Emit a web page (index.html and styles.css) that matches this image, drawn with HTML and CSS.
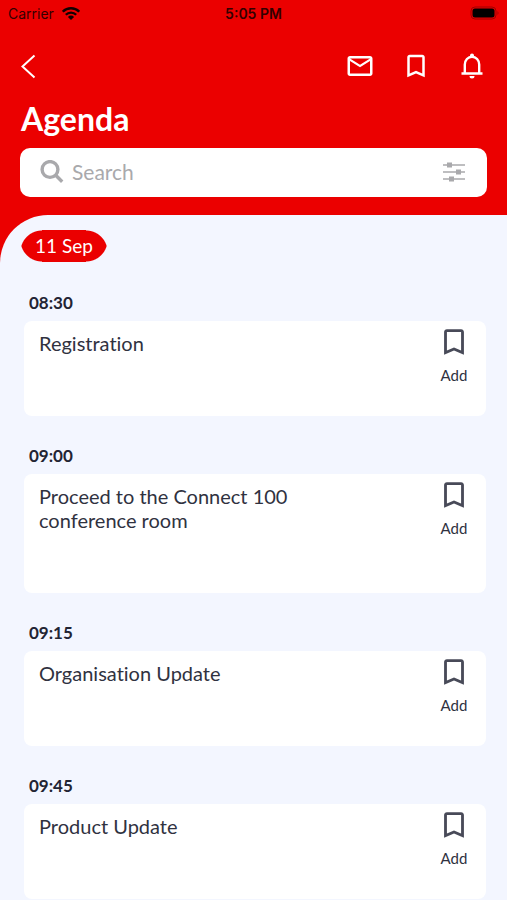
FILE: index.html
```html
<!DOCTYPE html>
<html lang="en">
<head>
<meta charset="utf-8">
<meta name="viewport" content="width=device-width, initial-scale=1">
<title>Agenda</title>
<link rel="stylesheet" href="styles.css">
</head>
<body>
<svg class="sprite" aria-hidden="true">
  <symbol id="bookmark" viewBox="0 0 24 24"><path fill="currentColor" d="M17 3H7c-1.100 0-1.990.9-1.990 2L5 21l7-3 7 3V5c0-1.100-.9-2-2-2zm0 15-5-2.180L7 18V5h10v13z"/></symbol>
</svg>
<header class="header">
  <div class="status">
    <div class="status-left">
      <span>Carrier</span>
      <svg class="wifi" viewBox="0 0 18 13" aria-hidden="true"><g fill="none" stroke="currentColor" stroke-width="2.300"><path d="M.8 4.700a11.500 11.500 0 0 1 16.400 0"/><path d="M3.800 7.800a7.300 7.300 0 0 1 10.400 0"/></g><path fill="currentColor" d="M9 13 5.900 9.900a4.400 4.400 0 0 1 6.200 0z"/></svg>
    </div>
    <span class="clock">5:05 PM</span>
    <div class="status-right">
      <svg class="battery" viewBox="0 0 30 14" aria-hidden="true"><rect x="2" y="1" width="25" height="12" rx="4" fill="none" stroke="#a00000" stroke-width="1"/><rect x="3.500" y="2.500" width="22" height="9" rx="2.500"/><path fill="#a00000" d="M28.500 5q2 2 0 4z"/></svg>
    </div>
  </div>
  <nav class="nav">
    <a class="back" href="#" aria-label="Back"><svg viewBox="0 0 16 26" aria-hidden="true"><path d="M14.500 2.500 2.500 13.500 14.500 24.500" fill="none" stroke="currentColor" stroke-width="2"/></svg></a>
    <div class="actions">
      <a href="#" aria-label="Messages"><svg viewBox="0 0 24 24" aria-hidden="true"><path fill="currentColor" d="M20 4H4c-1.100 0-1.990.9-1.990 2L2 18c0 1.100.9 2 2 2h16c1.100 0 2-.9 2-2V6c0-1.100-.9-2-2-2zm0 14H4V8l8 5 8-5v10zm-8-7L4 6h16l-8 5z"/></svg></a>
      <a href="#" aria-label="Saved"><svg aria-hidden="true"><use href="#bookmark"/></svg></a>
      <a href="#" aria-label="Notifications"><svg viewBox="0 0 30 30" aria-hidden="true"><path d="M7.800 22v-8.500a7.200 7.800 0 0 1 14.400 0V22M4.500 22.500h21" fill="none" stroke="currentColor" stroke-width="2.400"/><path fill="currentColor" d="M13 6V4.500a2 2 0 0 1 4 0V6zM12.500 25h5a2.500 2.500 0 0 1-5 0z"/></svg></a>
    </div>
  </nav>
  <h1>Agenda</h1>
  <form class="search" role="search">
    <svg class="lens" viewBox="0 0 24 24" aria-hidden="true"><g fill="none" stroke="currentColor" stroke-width="3.400"><circle cx="10" cy="9.500" r="7.900"/><path d="m15.500 15 6.700 6.700"/></g></svg>
    <input type="search" placeholder="Search" aria-label="Search agenda">
    <button class="filter" type="button" aria-label="Filter"><svg viewBox="0 0 22 20" aria-hidden="true"><path d="M0 3h22M0 10h22M0 17h22" stroke="currentColor" stroke-width="1.500"/><path fill="currentColor" d="M4 .5h5v5H4zM13 7.500h5v5h-5zM6 14.500h5v5H6z"/></svg></button>
  </form>
</header>
<div class="sheet">
  <main class="content">
    <button class="day" type="button">11 Sep</button>
    <section class="slot">
      <h2>08:30</h2>
      <article class="card"><h3>Registration</h3><button class="add" type="button"><svg aria-hidden="true"><use href="#bookmark"/></svg>Add</button></article>
    </section>
    <section class="slot">
      <h2>09:00</h2>
      <article class="card"><h3>Proceed to the Connect 100 conference room</h3><button class="add" type="button"><svg aria-hidden="true"><use href="#bookmark"/></svg>Add</button></article>
    </section>
    <section class="slot">
      <h2>09:15</h2>
      <article class="card"><h3>Organisation Update</h3><button class="add" type="button"><svg aria-hidden="true"><use href="#bookmark"/></svg>Add</button></article>
    </section>
    <section class="slot">
      <h2>09:45</h2>
      <article class="card"><h3>Product Update</h3><button class="add" type="button"><svg aria-hidden="true"><use href="#bookmark"/></svg>Add</button></article>
    </section>
  </main>
</div>
</body>
</html>
```
FILE: styles.css
```css
* { box-sizing: border-box; }

body {
  margin: 0;
  min-height: 100vh;
  background: #f3f6ff;
  color: #30323f;
  font-family: Lato, "Liberation Sans", sans-serif;
  font-variant-ligatures: none;
}

h1, h2, h3 { margin: 0; }
a { color: inherit; }
svg { display: block; }
.sprite { display: none; }

button {
  padding: 0;
  border: 0;
  background: none;
  color: inherit;
  font-family: inherit;
}

.header {
  padding-bottom: 18px;
  background: #eb0000;
  color: #fff;
}

.status {
  display: grid;
  grid-template-columns: 1fr auto 1fr;
  align-items: center;
  height: 26px;
  padding: 0 8px;
  color: #300;
  font: 14px Inter, sans-serif;
}

.status-left { display: flex; align-items: center; gap: 8px; }
.status-right { display: flex; justify-content: flex-end; }
.clock { font-weight: 600; }
.wifi { width: 18px; height: 13px; color: #100; }
.battery { width: 30px; height: 14px; }

.nav {
  display: flex;
  align-items: center;
  justify-content: space-between;
  height: 79px;
  padding: 0 20px;
}

.back svg { width: 16px; height: 26px; }
.actions { display: flex; gap: 26px; }
.actions svg { width: 30px; height: 30px; }

h1 {
  padding: 0 21px;
  font-size: 32px;
  line-height: 28px;
  font-weight: 700;
}

.search {
  display: flex;
  align-items: center;
  height: 49px;
  margin: 15px 20px 0;
  padding: 0 22px 2px 20px;
  border-radius: 10px;
  background: #fff;
  color: #a9a9ac;
}

.lens { flex: none; width: 24px; height: 24px; }

.search input {
  flex: 1;
  min-width: 0;
  padding: 0 8px;
  border: 0;
  outline: 0;
  background: none;
  color: #30323f;
  font: 21px Lato, sans-serif;
}

.search input::placeholder { color: #a9a9ac; opacity: 1; }
.filter svg { width: 22px; height: 20px; }

.sheet { background: linear-gradient(#eb0000 48px, #f3f6ff 48px); }

.content {
  padding: 15px 20px 0;
  border-top-left-radius: 48px;
  background: #f3f6ff;
}

/* Pill whose round ends meet in a slight point at mid-height */
.day {
  display: block;
  height: 32px;
  padding: 0 15px;
  background:
    radial-gradient(circle at 22px 22px, #eb0000 21px, transparent 22px) 0 0 / 22px 16px no-repeat,
    radial-gradient(circle at 22px -6px, #eb0000 21px, transparent 22px) 0 100% / 22px 16px no-repeat,
    radial-gradient(circle at 0 22px, #eb0000 21px, transparent 22px) 100% 0 / 22px 16px no-repeat,
    radial-gradient(circle at 0 -6px, #eb0000 21px, transparent 22px) 100% 100% / 22px 16px no-repeat,
    linear-gradient(#eb0000, #eb0000) 50% 0 / calc(100% - 44px) 100% no-repeat;
  color: #fff;
  font-size: 19px;
  line-height: 30px;
}

.slot { padding: 28px 1px 0 4px; }
.day + .slot { padding-top: 29px; }

h2 {
  padding: 0 5px 6px;
  font-size: 17px;
  line-height: 24px;
  font-weight: 700;
  color: #222433;
}

.card {
  display: flex;
  align-items: flex-start;
  justify-content: space-between;
  padding: 0 12px 0 15px;
  border-radius: 8px;
  background: #fff;
}

.card h3 {
  max-width: 280px;
  padding: 10px 0 61px;
  font-size: 20px;
  line-height: 24px;
  font-weight: 400;
}

.add {
  display: flex;
  flex-direction: column;
  align-items: center;
  gap: 7px;
  width: 40px;
  padding-top: 4px;
  font-size: 15px;
  line-height: 18px;
}

.add svg { width: 34px; height: 34px; color: #484a58; }
```
